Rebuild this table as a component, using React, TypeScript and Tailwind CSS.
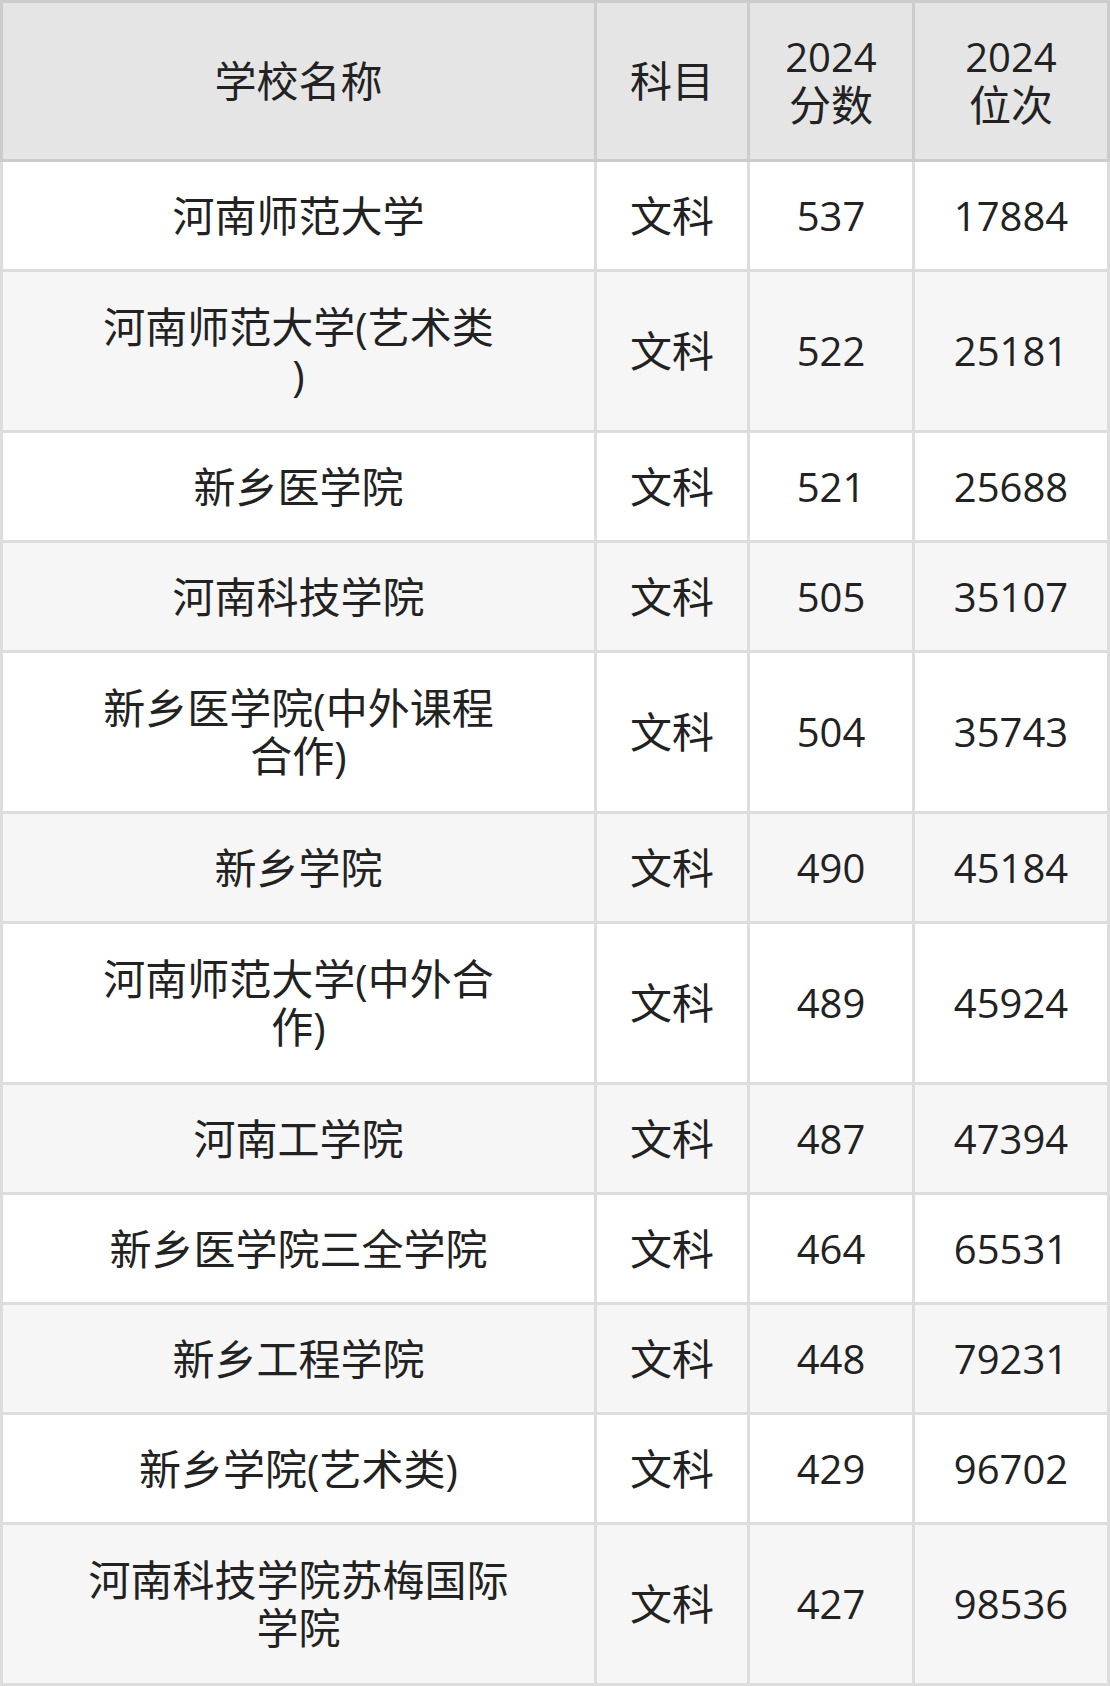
const rows: { name: string[]; score: string; rank: string }[] = [
  { name: ['河南师范大学'], score: '537', rank: '17884' },
  { name: ['河南师范大学(艺术类', ')'], score: '522', rank: '25181' },
  { name: ['新乡医学院'], score: '521', rank: '25688' },
  { name: ['河南科技学院'], score: '505', rank: '35107' },
  { name: ['新乡医学院(中外课程', '合作)'], score: '504', rank: '35743' },
  { name: ['新乡学院'], score: '490', rank: '45184' },
  { name: ['河南师范大学(中外合', '作)'], score: '489', rank: '45924' },
  { name: ['河南工学院'], score: '487', rank: '47394' },
  { name: ['新乡医学院三全学院'], score: '464', rank: '65531' },
  { name: ['新乡工程学院'], score: '448', rank: '79231' },
  { name: ['新乡学院(艺术类)'], score: '429', rank: '96702' },
  { name: ['河南科技学院苏梅国际', '学院'], score: '427', rank: '98536' },
];

function Cell({ lines, h }: { lines: string[]; h: string }) {
  return (
    <div className={`flex flex-col items-center justify-center text-center ${h}`}>
      {lines.map((l, i) => (
        <span key={i} className={`block whitespace-nowrap ${/^\d+$/.test(l) ? 'text-[40px]' : ''}`}>
          {l}
        </span>
      ))}
    </div>
  );
}

export default function App() {
  return (
    <div
      className="w-[1110px] bg-white text-[42px] leading-[48px] text-[#222222]"
      style={{ fontFamily: '"Open Sans", "Noto Sans CJK SC", sans-serif' }}
    >
      <table className="w-[1110px] table-fixed border-collapse">
        <colgroup>
          <col className="w-[594px]" />
          <col className="w-[153px]" />
          <col className="w-[165px]" />
          <col />
        </colgroup>
        <thead>
          <tr className="bg-[#e5e5e5]">
            <th className="border-[3px] border-[#cccccc] p-0 font-normal">
              <Cell lines={['学校名称']} h="h-[156px]" />
            </th>
            <th className="border-[3px] border-[#cccccc] p-0 font-normal">
              <Cell lines={['科目']} h="h-[156px]" />
            </th>
            <th className="border-[3px] border-[#cccccc] p-0 font-normal">
              <Cell lines={['2024', '分数']} h="h-[156px]" />
            </th>
            <th className="border-[3px] border-[#cccccc] p-0 font-normal">
              <Cell lines={['2024', '位次']} h="h-[156px]" />
            </th>
          </tr>
        </thead>
        <tbody>
          {rows.map((r, i) => {
            const h = r.name.length > 1 ? 'h-[158px]' : 'h-[107px]';
            return (
              <tr key={i} className={i % 2 === 0 ? 'bg-white' : 'bg-[#f6f6f6]'}>
                <td className="border-[3px] border-[#dddddd] p-0">
                  <Cell lines={r.name} h={h} />
                </td>
                <td className="border-[3px] border-[#dddddd] p-0">
                  <Cell lines={['文科']} h={h} />
                </td>
                <td className="border-[3px] border-[#dddddd] p-0">
                  <Cell lines={[r.score]} h={h} />
                </td>
                <td className="border-[3px] border-[#dddddd] p-0">
                  <Cell lines={[r.rank]} h={h} />
                </td>
              </tr>
            );
          })}
        </tbody>
      </table>
    </div>
  );
}
